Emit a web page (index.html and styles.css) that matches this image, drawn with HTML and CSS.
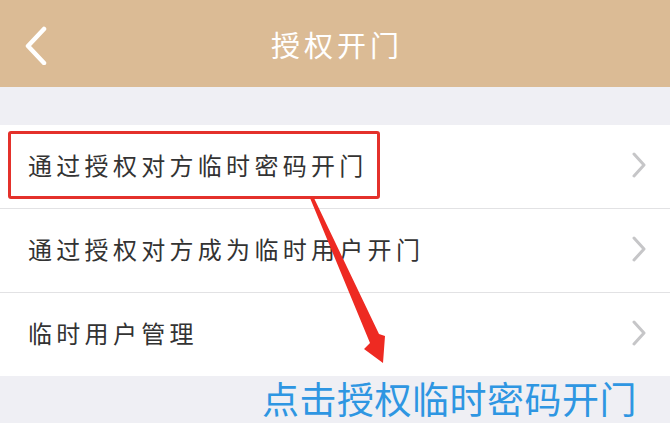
FILE: index.html
```html
<!DOCTYPE html>
<html lang="zh">
<head>
<meta charset="utf-8">
<link rel="stylesheet" href="styles.css">
</head>
<body>
<div class="page">
  <header class="nav">
    <svg class="back" width="30" height="40" viewBox="0 0 30 40"><polyline points="20,4 4,21 20,38" fill="none" stroke="#fff" stroke-width="4.5" stroke-linecap="round" stroke-linejoin="round"/></svg>
    <h1 class="title">授权开门</h1>
  </header>
  <div class="spacer"></div>
  <ul class="list">
    <li class="row">
      <span class="label">通过授权对方临时密码开门</span>
      <svg class="chev" width="16" height="26" viewBox="0 0 16 26"><polyline points="3,2 13,13 3,24" fill="none" stroke="#c6c6c8" stroke-width="3" stroke-linecap="round" stroke-linejoin="round"/></svg>
      <div class="highlight"></div>
    </li>
    <li class="row">
      <span class="label">通过授权对方成为临时用户开门</span>
      <svg class="chev" width="16" height="26" viewBox="0 0 16 26"><polyline points="3,2 13,13 3,24" fill="none" stroke="#c6c6c8" stroke-width="3" stroke-linecap="round" stroke-linejoin="round"/></svg>
    </li>
    <li class="row last">
      <span class="label">临时用户管理</span>
      <svg class="chev" width="16" height="26" viewBox="0 0 16 26"><polyline points="3,2 13,13 3,24" fill="none" stroke="#c6c6c8" stroke-width="3" stroke-linecap="round" stroke-linejoin="round"/></svg>
    </li>
  </ul>
  <div class="footer">
    <span class="hint">点击授权临时密码开门</span>
  </div>
  <svg class="arrow" width="670" height="423" viewBox="0 0 670 423">
    <polygon points="310,198 314,198 379,334 385,336 383,363 364,349 370,343" fill="#ee2a22"/>
  </svg>
</div>
</body>
</html>
```

FILE: styles.css
```css
* { box-sizing: border-box; }
html, body { margin: 0; padding: 0; }
body {
  width: 670px;
  height: 423px;
  overflow: hidden;
  background: #efeff4;
  font-family: "Noto Sans CJK SC", "Noto Sans", sans-serif;
}
.page {
  position: relative;
  width: 670px;
  height: 423px;
  display: flex;
  flex-direction: column;
}
.nav {
  height: 87px;
  background: #dbbb95;
  display: flex;
  align-items: center;
  justify-content: center;
  position: relative;
  flex: none;
}
.back {
  position: absolute;
  left: 24px;
  top: 25px;
}
.title {
  margin: 0;
  color: #fff;
  font-size: 29px;
  font-weight: 400;
  letter-spacing: 4px;
  padding-left: 4px;
}
.spacer { height: 38px; flex: none; }
.list {
  list-style: none;
  margin: 0;
  padding: 0;
  background: #fff;
  flex: none;
}
.row {
  position: relative;
  height: 84px;
  display: flex;
  align-items: center;
  justify-content: space-between;
  padding: 0 23px 4px 28px;
  border-bottom: 1px solid #e2e2e4;
}
.row.last { border-bottom: none; height: 83px; }
.label {
  font-size: 24px;
  color: #333;
  letter-spacing: 4.3px;
}
.highlight {
  position: absolute;
  left: 8px;
  top: 6px;
  width: 372px;
  height: 68px;
  border: 3px solid #e4312b;
  border-radius: 3px;
}
.footer {
  flex: 1;
  display: flex;
  justify-content: flex-end;
  align-items: flex-start;
  padding-right: 33px;
}
.hint {
  color: #2e96e2;
  font-size: 37px;
  line-height: 44px;
  letter-spacing: 0.5px;
}
.arrow {
  position: absolute;
  left: 0;
  top: 0;
  pointer-events: none;
}
```
